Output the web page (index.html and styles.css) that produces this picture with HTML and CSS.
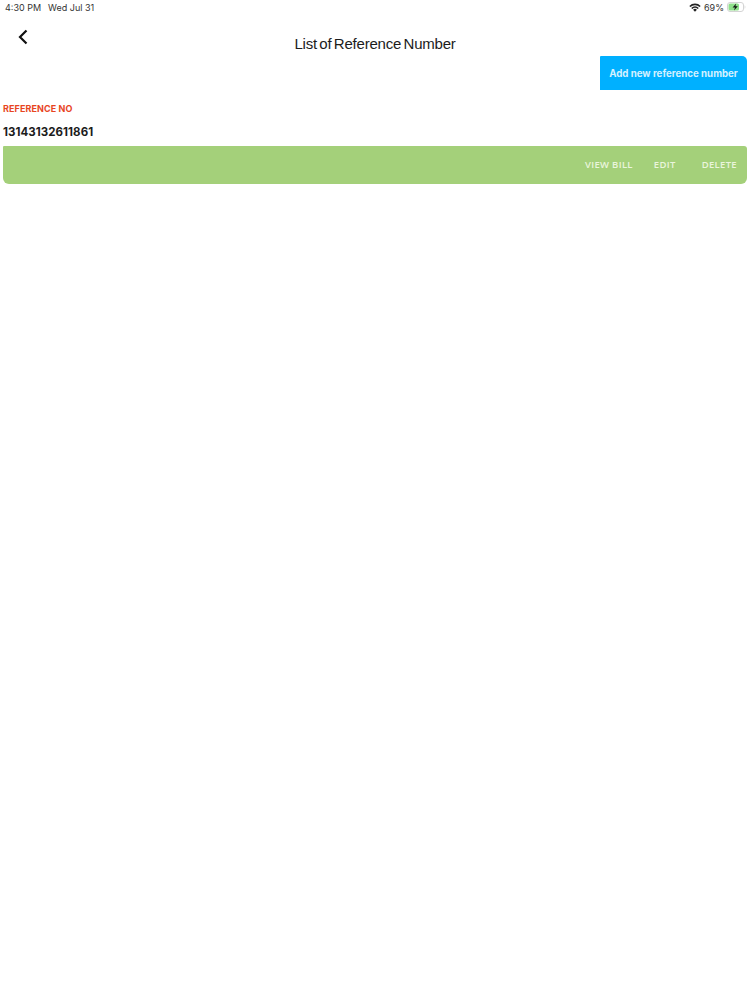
FILE: index.html
```html
<!DOCTYPE html>
<html lang="en">
<head>
    <meta charset="UTF-8">
    <meta name="viewport" content="width=device-width, initial-scale=1.0">
    <title>List of Reference Number</title>
    <link rel="stylesheet" href="styles.css">
</head>
<body>
    <div class="status-bar">
        <div class="status-left">
            <span>4:30 PM</span>
            <span>Wed Jul 31</span>
        </div>
        <div class="status-right">
            <svg class="wifi" width="12" height="9" viewBox="0 0 12 9">
                <path d="M0.3 3 A8 8 0 0 1 11.7 3 L10.6 4.1 A6.5 6.5 0 0 0 1.4 4.1 Z" fill="#222"/>
                <path d="M2.2 4.9 A5.3 5.3 0 0 1 9.8 4.9 L8.7 6 A3.8 3.8 0 0 0 3.3 6 Z" fill="#222"/>
                <path d="M4.1 6.8 A2.7 2.7 0 0 1 7.9 6.8 L6 8.8 Z" fill="#222"/>
            </svg>
            <span>69%</span>
            <svg class="battery" width="19" height="10" viewBox="0 0 19 10">
                <rect x="0.5" y="0.5" width="16" height="9" rx="2.5" fill="none" stroke="#d4d4d4"/>
                <rect x="1.5" y="1.5" width="10.5" height="7" rx="1.5" fill="#8fe08a"/>
                <path d="M17.6 3.2 C18.6 3.6 18.6 6.4 17.6 6.8 Z" fill="#d4d4d4"/>
                <path d="M9.2 1.5 L5.6 5.6 H8 L7 8.5 L10.8 4.3 H8.4 Z" fill="#111"/>
            </svg>
        </div>
    </div>

    <div class="nav-bar">
        <a class="back" href="#">
            <svg width="10" height="16" viewBox="0 0 10 16">
                <path d="M8.5 1.5 L2 8 L8.5 14.5" fill="none" stroke="#111" stroke-width="2.2"/>
            </svg>
        </a>
        <h1 class="title">List of Reference Number</h1>
    </div>

    <div class="actions">
        <button class="add-btn">Add new reference number</button>
    </div>

    <div class="reference">
        <div class="ref-label">REFERENCE NO</div>
        <div class="ref-number">13143132611861</div>
        <div class="ref-bar">
            <span class="bar-link">VIEW BILL</span>
            <span class="bar-link edit">EDIT</span>
            <span class="bar-link">DELETE</span>
        </div>
    </div>
</body>
</html>
```

FILE: styles.css
```css
body {
    margin: 0;
    background: #fff;
    font-family: Inter, "Liberation Sans", sans-serif;
    color: #1c1c1c;
}
.status-bar {
    display: flex;
    justify-content: space-between;
    align-items: center;
    height: 14px;
    padding: 0 4px 0 5px;
    font-size: 9px;
    color: #333;
}
.status-left {
    display: flex;
    gap: 7px;
}
.status-right {
    display: flex;
    align-items: center;
    gap: 3px;
}
.nav-bar {
    position: relative;
    height: 42px;
    text-align: center;
}
.back {
    position: absolute;
    left: 18px;
    top: 15px;
    line-height: 0;
}
.title {
    margin: 0;
    padding-top: 21px;
    font-family: "Liberation Sans", Arial, sans-serif;
    font-size: 15px;
    font-weight: 400;
    line-height: 18px;
    letter-spacing: -0.22px;
    word-spacing: -1.5px;
}
.actions {
    display: flex;
    justify-content: flex-end;
    padding-right: 3px;
}
.add-btn {
    width: 147px;
    height: 34px;
    padding: 0;
    border: none;
    border-radius: 1px 5px 0 0;
    background: #00b0ff;
    color: #d4f1ff;
    font-family: Inter, sans-serif;
    font-size: 9.7px;
    font-weight: 700;
}
.reference {
    padding: 0 3px;
}
.ref-label {
    margin-top: 14px;
    font-size: 9px;
    font-weight: 700;
    line-height: 10px;
    letter-spacing: 0.1px;
    color: #e8451f;
}
.ref-number {
    margin-top: 11px;
    font-size: 11.5px;
    font-weight: 700;
    line-height: 14px;
    letter-spacing: 0.05px;
}
.ref-bar {
    display: flex;
    justify-content: flex-end;
    align-items: center;
    box-sizing: border-box;
    height: 38px;
    margin-top: 7px;
    padding: 0 10px 2px 0;
    border-radius: 1px 3px 6px 6px;
    background: #a4d07a;
}
.bar-link {
    margin-left: 21px;
    font-family: "Open Sans", sans-serif;
    font-size: 9.5px;
    font-weight: 600;
    letter-spacing: 0.32px;
    color: #eaf5dc;
}
.bar-link.edit {
    margin-right: 5px;
}
```
